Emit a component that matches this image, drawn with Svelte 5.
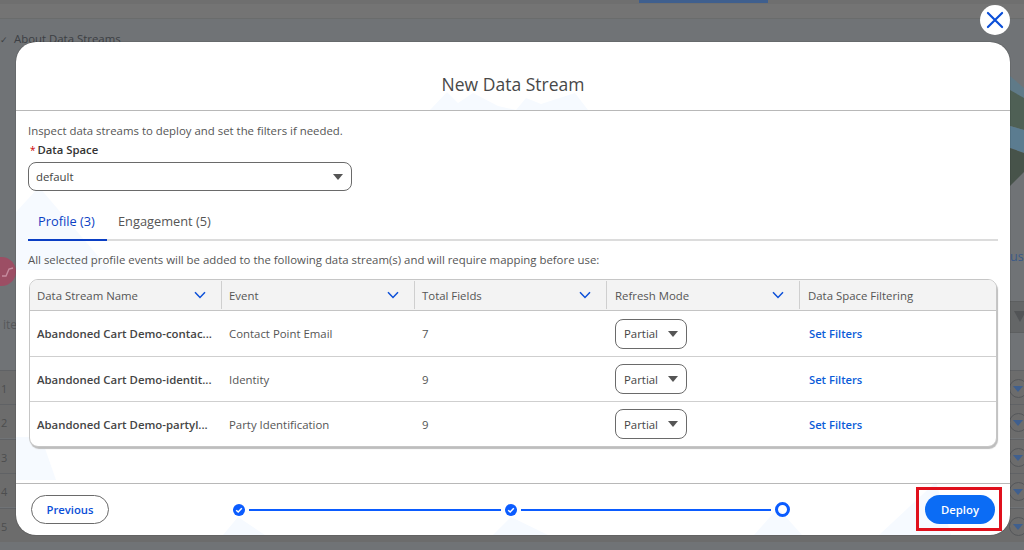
<script>
  const columns = [
    { label: 'Data Stream Name', sort: true },
    { label: 'Event', sort: true },
    { label: 'Total Fields', sort: true },
    { label: 'Refresh Mode', sort: true },
    { label: 'Data Space Filtering', sort: false }
  ];
  const rows = [
    { name: 'Abandoned Cart Demo-contac...', event: 'Contact Point Email', fields: 7 },
    { name: 'Abandoned Cart Demo-identit...', event: 'Identity', fields: 9 },
    { name: 'Abandoned Cart Demo-partyl...', event: 'Party Identification', fields: 9 }
  ];
  const bgRows = [1, 2, 3, 4, 5];
</script>

<div class="page">
  <div class="topbar"><span class="toptab"></span></div>
  <div class="about"><span class="tick">✓</span>About Data Streams</div>
  <svg class="leaves" viewBox="0 0 14 120" width="14" height="120">
    <path d="M0 8 14 20V46L0 40Z" fill="#5f7a88"/>
    <path d="M0 22 14 30V62L0 58Z" fill="#4f6055"/>
    <path d="M0 58 14 62V85L0 80Z" fill="#5b7c90"/>
    <path d="M0 80 14 85V104L0 118Z" fill="#47534a"/>
  </svg>
  <div class="pink">
    <svg viewBox="0 0 16 16" width="16" height="16"><path d="M2 12 6 12 9 5 13 4" stroke="#c68c9e" stroke-width="1.4" fill="none"/></svg>
  </div>
  <div class="ite">ite</div>
  <div class="us">us</div>
  <div class="filter"><i></i></div>
  {#each bgRows as n, i}
    <div class="bgrow" style="top:{i * 34.4 + 370}px">
      <span class="bgnum">{n}</span>
      <span class="bgbtn"></span>
    </div>
  {/each}

  <button class="close" aria-label="Close">
    <svg viewBox="0 0 24 24" width="20" height="20"><path d="M3.5 3.5 20.5 20.5M20.5 3.5 3.5 20.5" stroke="#0b4fd8" stroke-width="2.6" stroke-linecap="round" fill="none"/></svg>
  </button>

  <section class="modal">
    <svg class="deco" viewBox="0 0 994 493" width="994" height="493">
      <g fill="#f6faff">
        <path d="M414 68 431 50 442 61 457 51 482 64 500 68H414Z"/>
        <path d="M500 68 510 56 525 62 559 51 572 68Z"/>
        <path d="M0 170 23 145 94 228H0Z"/>
        <path d="M0 395 25 395 40 438H0Z"/>
        <path d="M207 493 222 475 249 493Z"/>
        <path d="M477 493 495 475 532 493Z"/>
        <path d="M738 493 762 466 786 493Z"/>
        <path d="M863 493 920 440 935 493Z"/>
        <path d="M818 405 829 393 843 405Z"/>
      </g>
    </svg>

    <header class="head"><h1>New Data Stream</h1></header>

    <div class="body">
      <p class="intro">Inspect data streams to deploy and set the filters if needed.</p>
      <div class="label"><span class="req">*</span>Data Space</div>
      <div class="select wide"><span>default</span><i class="caret"></i></div>

      <nav class="tabs">
        <span class="tab active">Profile (3)</span>
        <span class="tab">Engagement (5)</span>
      </nav>

      <p class="note">All selected profile events will be added to the following data stream(s) and will require mapping before use:</p>

      <div class="table">
        <div class="row headrow">
          {#each columns as c}
            <div class="th">
              <span>{c.label}</span>
              {#if c.sort}
                <svg viewBox="0 0 12 8" width="12" height="8"><path d="M1 1.2 6 6.4 11 1.2" stroke="#0b4fd8" stroke-width="1.5" fill="none"/></svg>
              {/if}
            </div>
          {/each}
        </div>
        {#each rows as r}
          <div class="row">
            <div class="td strong">{r.name}</div>
            <div class="td">{r.event}</div>
            <div class="td">{r.fields}</div>
            <div class="td"><div class="select small"><span>Partial</span><i class="caret"></i></div></div>
            <div class="td"><span class="link">Set Filters</span></div>
          </div>
        {/each}
      </div>
    </div>

    <footer class="foot">
      <button class="btn ghost">Previous</button>
      <div class="steps">
        <span class="dot"><svg viewBox="0 0 12 12" width="12" height="12"><circle cx="6" cy="6" r="6" fill="#0b5cff"/><path d="M3.2 6.2 5.2 8 8.8 4.3" stroke="#fff" stroke-width="1.5" fill="none"/></svg></span>
        <span class="line first"></span>
        <span class="dot"><svg viewBox="0 0 12 12" width="12" height="12"><circle cx="6" cy="6" r="6" fill="#0b5cff"/><path d="M3.2 6.2 5.2 8 8.8 4.3" stroke="#fff" stroke-width="1.5" fill="none"/></svg></span>
        <span class="line second"></span>
        <span class="ring"></span>
      </div>
      <div class="deploywrap"><button class="btn primary">Deploy</button></div>
    </footer>
  </section>
</div>

<style>
  :global(body) { margin: 0; }
  .page {
    position: relative;
    width: 1024px;
    height: 550px;
    overflow: hidden;
    background: #707376;
    font-family: "Open Sans", "Noto Sans", sans-serif;
    font-size: 12px;
    color: #444;
  }
  .topbar {
    height: 19px;
    background: #747474;
    border-top: 4px solid #6f6f6f;
    border-bottom: 1px solid #6a6c6c;
    box-sizing: border-box;
    position: relative;
  }
  .toptab {
    position: absolute;
    left: 639px;
    top: -4px;
    width: 129px;
    height: 3px;
    background: #3f5f8e;
  }
  .about {
    position: absolute;
    left: 0;
    top: 31px;
    font-size: 11.4px;
    color: #3c3f44;
    white-space: nowrap;
  }
  .tick { display: inline-block; width: 14px; font-size: 9px; color: #3c3f44; }
  .leaves { position: absolute; left: 1010px; top: 68px; }
  .pink {
    position: absolute;
    left: -13px;
    top: 257px;
    width: 29px;
    height: 29px;
    border-radius: 50%;
    background: #9c4e64;
    display: flex;
    align-items: center;
    justify-content: flex-end;
  }
  .ite { position: absolute; left: 3px; top: 316px; color: #56585a; font-size: 12px; }
  .us { position: absolute; left: 1010px; top: 248px; color: #3b5a88; font-size: 12.5px; }
  .filter {
    position: absolute;
    left: 1010px;
    top: 301px;
    width: 14px;
    height: 32px;
    background: #646667;
    border-top: 1px solid #5d5f60;
    border-bottom: 1px solid #5d5f60;
    box-sizing: border-box;
  }
  .filter i {
    position: absolute;
    left: 4px;
    top: 9px;
    width: 0;
    height: 0;
    border: 6px solid transparent;
    border-top: 11px solid #525456;
    border-bottom: 0;
  }
  .bgrow {
    position: absolute;
    left: 0;
    width: 1024px;
    height: 34px;
    border-top: 1px solid #606265;
    box-sizing: border-box;
    background: #6c6c6c;
  }
  .bgnum { position: absolute; left: 1px; top: 11px; font-size: 11px; line-height: 14px; color: #4d4e4f; }
  .bgbtn {
    position: absolute;
    left: 1009px;
    top: 8px;
    width: 17px;
    height: 17px;
    border: 1px solid #55575a;
    border-radius: 50%;
  }
  .bgbtn::after {
    content: "";
    position: absolute;
    left: 3px;
    top: 6px;
    border: 5px solid transparent;
    border-top: 6px solid #3f5f8e;
    border-bottom: 0;
  }

  .close {
    position: absolute;
    left: 980px;
    top: 5px;
    width: 30px;
    height: 30px;
    padding: 0;
    border: 0;
    border-radius: 50%;
    background: #fff;
    display: flex;
    align-items: center;
    justify-content: center;
  }

  .modal {
    position: absolute;
    left: 16px;
    top: 42px;
    width: 994px;
    height: 493px;
    background: #fff;
    border-radius: 20px;
    display: flex;
    flex-direction: column;
    overflow: hidden;
    box-shadow: 0 0 1px rgba(0, 0, 0, 0.8);
  }
  .deco { position: absolute; left: 0; top: 0; pointer-events: none; }
  .head {
    position: relative;
    height: 69px;
    box-sizing: border-box;
    border-bottom: 1px solid #b8b8b8;
    display: flex;
    align-items: center;
    justify-content: center;
    flex: none;
  }
  h1 { margin: 0; padding-top: 16px; font-size: 17.5px; font-weight: 400; color: #484848; line-height: 24px; }
  .body {
    position: relative;
    flex: 1;
    padding: 12px 12px 0;
  }
  .intro { margin: 0; font-size: 11.4px; line-height: 16px; color: #555; }
  .label { margin-top: 3px; font-size: 11.3px; line-height: 16px; font-weight: 600; color: #333; }
  .req { color: #c00; margin: 0 2px; font-weight: 400; font-size: 10px; }
  .select {
    display: flex;
    align-items: center;
    justify-content: space-between;
    box-sizing: border-box;
    background: #fff;
    border: 1px solid #6a6a6a;
    border-radius: 8px;
    color: #444;
  }
  .wide { margin-top: 4px; width: 324px; height: 29px; padding: 0 8px 0 7px; font-size: 11.4px; }
  .small { width: 72px; height: 30px; padding: 0 8px 0 8px; font-size: 11.4px; }
  .caret {
    width: 0;
    height: 0;
    border: 5px solid transparent;
    border-top: 6px solid #555;
    border-bottom: 0;
  }
  .tabs {
    margin-top: 15px;
    width: 970px;
    height: 35px;
    box-sizing: border-box;
    border-bottom: 2px solid #dcdcdc;
    display: flex;
    font-size: 12.8px;
  }
  .tab { padding: 0 11px; line-height: 30px; height: 33px; box-sizing: border-box; color: #555; }
  .active { width: 79px; padding-left: 10px; color: #0b3fc4; border-bottom: 2px solid #0b3fc4; height: 35px; }
  .note { margin: 11px 0 0; font-size: 11.4px; line-height: 16px; color: #555; }
  .table {
    margin-top: 11px;
    width: 968px;
    margin-left: 1px;
    box-sizing: border-box;
    border: 1px solid #c6c6c6;
    border-radius: 9px;
    box-shadow: 1px 2px 1px #bdbdbd;
    overflow: hidden;
    background: #fff;
  }
  .row {
    display: grid;
    grid-template-columns: 192px 193px 192px 193px 1fr;
    height: 45px;
    border-top: 1px solid #cfcfcf;
    box-sizing: border-box;
    align-items: center;
  }
  .headrow { height: 31px; background: #f3f3f3; border-top: 0; border-bottom: 1px solid #c4c4c4; }
  .row:nth-child(2) { border-top: 0; height: 45px; }
  .th {
    height: 28px;
    padding: 0 15px 0 7px;
    display: flex;
    align-items: center;
    justify-content: space-between;
    font-size: 11.4px;
    font-weight: 500;
    color: #555;
    border-right: 1px solid #cfcfcf;
  }
  .th:last-child { border-right: 0; }
  .th:nth-child(n + 4) { padding-left: 8px; }
  .td { padding: 0 7px; font-size: 11.4px; color: #555; white-space: nowrap; overflow: hidden; }
  .td:nth-child(4) { padding-left: 8px; }
  .strong { font-weight: 600; color: #444; }
  .link { font-size: 11.2px; font-weight: 600; color: #0b5cd8; padding-left: 2px; }
  .foot {
    position: relative;
    flex: none;
    height: 52px;
    box-sizing: border-box;
    border-top: 1px solid #b8b8b8;
    display: flex;
    align-items: center;
    padding: 0 16px 0 15px;
  }
  .btn {
    height: 29px;
    border-radius: 15px;
    font-family: inherit;
    font-size: 11.3px;
    font-weight: 600;
    padding: 0;
    box-sizing: border-box;
  }
  .ghost { width: 78px; background: #fff; border: 1px solid #6a6a6a; color: #0b4fd8; }
  .primary { width: 70px; background: #0b6cf5; border: 0; color: #fff; }
  .steps {
    margin-left: 124px;
    display: flex;
    align-items: center;
    gap: 4px;
  }
  .dot { display: flex; }
  .line { height: 2px; background: #0b5cff; }
  .first { width: 252px; }
  .second { width: 250px; }
  .ring {
    width: 15px;
    height: 15px;
    box-sizing: border-box;
    border: 3px solid #0b5cff;
    border-radius: 50%;
  }
  .deploywrap {
    margin-left: auto;
    margin-right: -8px;
    margin-top: -1px;
    padding: 5px 4px 4px 6px;
    border: 3px solid #e0101c;
    display: flex;
  }
</style>
